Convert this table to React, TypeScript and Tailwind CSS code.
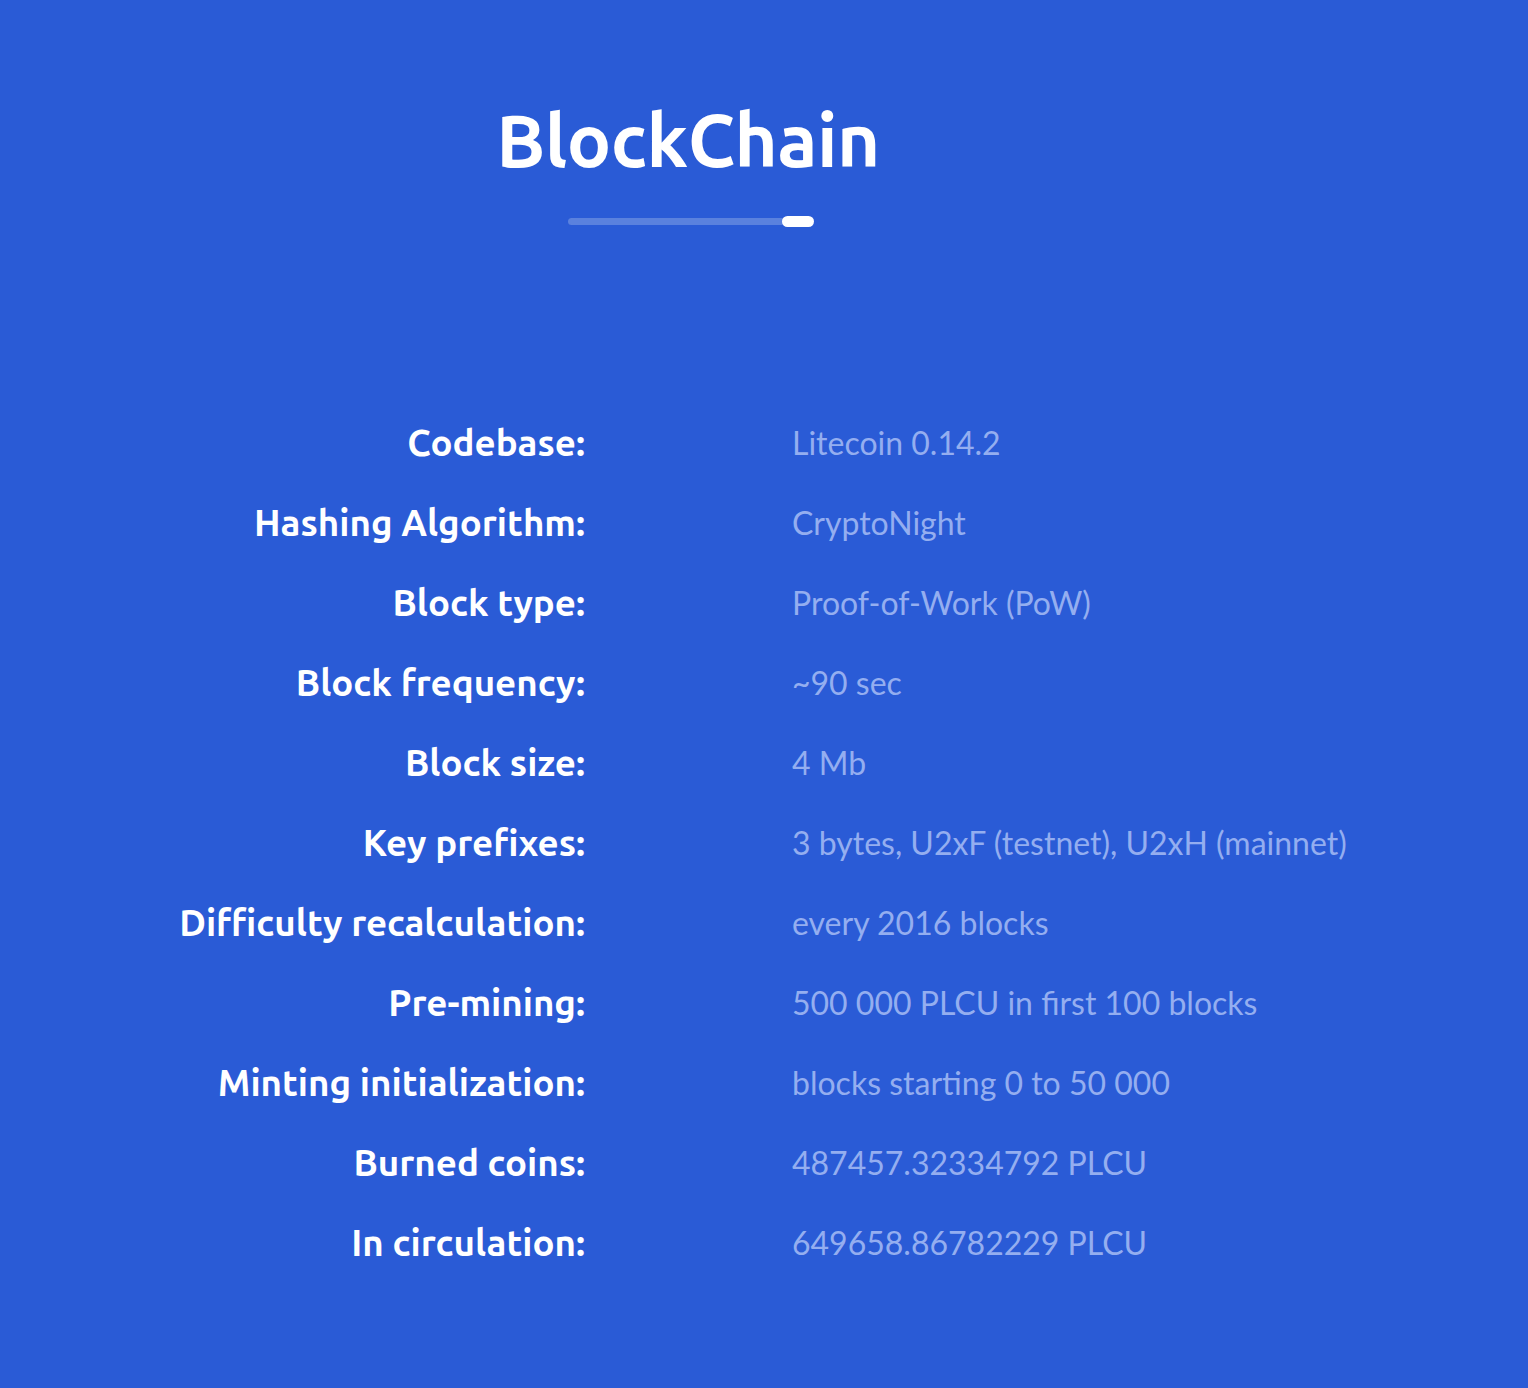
const rows: [string, string][] = [
  ["Codebase:", "Litecoin 0.14.2"],
  ["Hashing Algorithm:", "CryptoNight"],
  ["Block type:", "Proof-of-Work (PoW)"],
  ["Block frequency:", "~90 sec"],
  ["Block size:", "4 Mb"],
  ["Key prefixes:", "3 bytes, U2xF (testnet), U2xH (mainnet)"],
  ["Difficulty recalculation:", "every 2016 blocks"],
  ["Pre-mining:", "500 000 PLCU in first 100 blocks"],
  ["Minting initialization:", "blocks starting 0 to 50 000"],
  ["Burned coins:", "487457.32334792 PLCU"],
  ["In circulation:", "649658.86782229 PLCU"],
];

export default function App() {
  return (
    <div className="w-[1528px] h-[1388px] bg-[#2a5bd6] overflow-hidden">
      {/* header */}
      <div className="w-[1376px] flex flex-col items-center pt-[96px]">
        <h1 className="text-white font-bold text-[74px] leading-[88px] font-['Ubuntu','Noto_Sans',sans-serif] tracking-[-0.5px]">
          BlockChain
        </h1>
        <div className="mt-[32px] ml-[6px] flex items-center w-[246px]">
          <div className="h-[7px] flex-1 rounded-full bg-[#5a81de]" />
          <div className="h-[11px] w-[32px] -ml-[3px] rounded-full bg-white" />
        </div>
      </div>

      {/* table */}
      <div className="mt-[176px] grid grid-cols-[585px_1fr] gap-x-[207px]">
        {rows.map(([label, value]) => (
          <div key={label} className="contents">
            <div className="h-[80px] flex items-center justify-end text-white font-bold text-[36.7px] font-['Ubuntu','Noto_Sans',sans-serif]">
              {label}
            </div>
            <div className="h-[80px] flex items-center text-[#94aef0] text-[32px] font-['Lato',sans-serif]">
              {value}
            </div>
          </div>
        ))}
      </div>
    </div>
  );
}
